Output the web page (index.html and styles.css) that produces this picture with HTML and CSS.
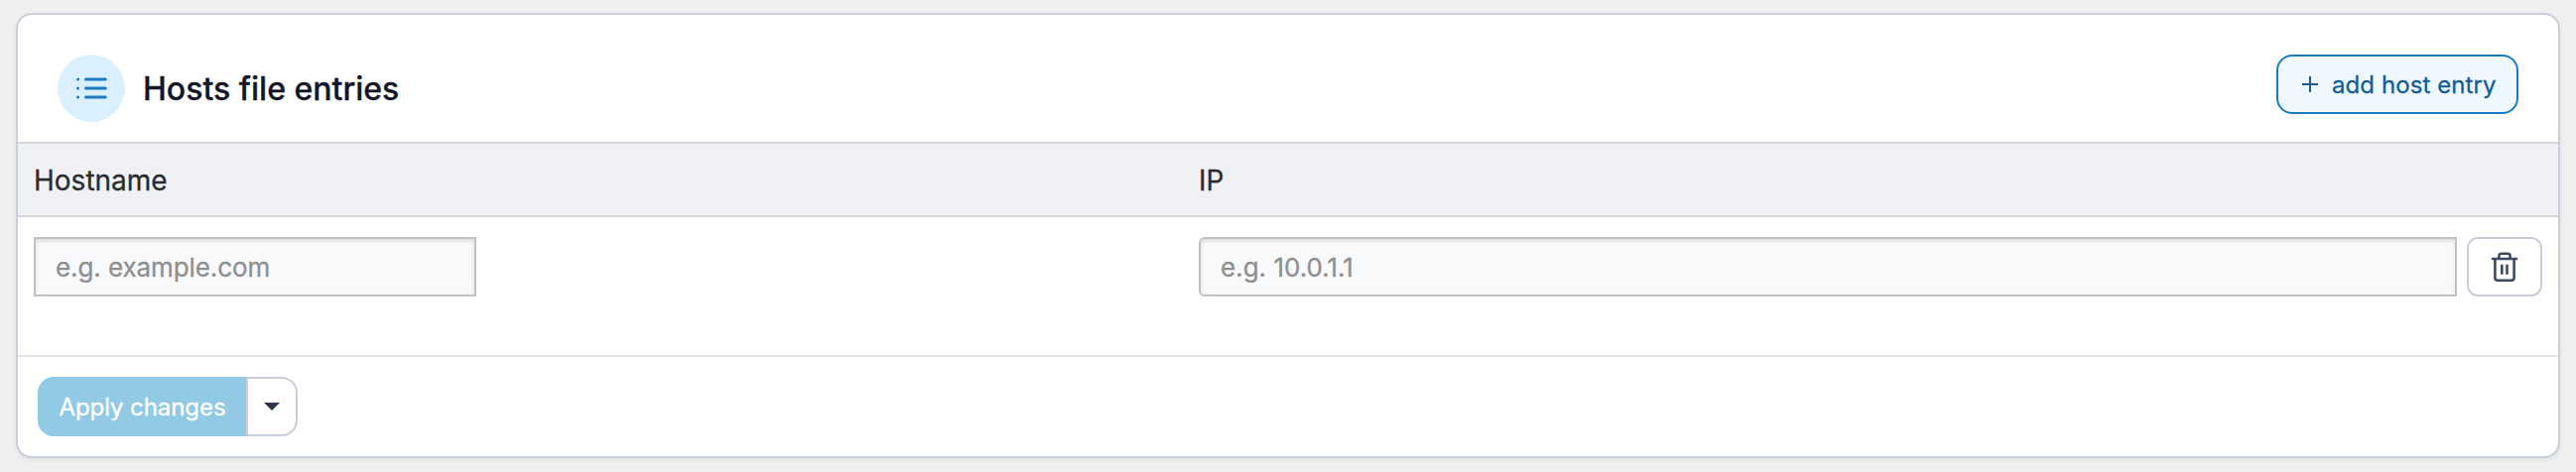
FILE: index.html
```html
<!DOCTYPE html>
<html lang="en">
<head>
<meta charset="utf-8">
<title>Hosts file entries</title>
<link rel="stylesheet" href="styles.css">
</head>
<body>
<section class="card">
  <header class="card-header">
    <div class="heading">
      <span class="badge">
        <svg width="32" height="24" viewBox="0 0 32 24" fill="none" stroke="#1a7cc0" stroke-width="3" stroke-linecap="round">
          <path d="M10.5 3h19.8M10.5 12h19.8M10.5 21h19.8M2.5 3h.1M2.5 12h.1M2.5 21h.1"/>
        </svg>
      </span>
      <h2 class="title">Hosts file entries</h2>
    </div>
    <button class="btn-add" type="button">
      <svg width="16" height="16" viewBox="0 0 16 16" fill="none" stroke="#135d94" stroke-width="2"><path d="M8 0v16M0 8h16"/></svg>
      <span class="add-label">add host entry</span>
    </button>
  </header>
  <div class="columns table-head">
    <span class="column-name">Hostname</span>
    <span class="column-name">IP</span>
  </div>
  <div class="columns table-row">
    <div class="cell"><input class="field field-host" type="text" placeholder="e.g. example.com"></div>
    <div class="cell">
      <input class="field field-ip" type="text" placeholder="e.g. 10.0.1.1">
      <button class="btn-delete" type="button" aria-label="Delete">
        <svg width="28" height="32" viewBox="0 0 28 32" fill="none" stroke="#3d4b5f" stroke-width="2.6" stroke-linecap="round" stroke-linejoin="round">
          <path d="M2 8h24M4.4 8v19.3a2.4 2.4 0 0 0 2.4 2.4h14.4a2.4 2.4 0 0 0 2.4-2.4V8M8.4 7.600V5.300a2.500 2.500 0 0 1 2.500-2.500h6.200a2.500 2.500 0 0 1 2.500 2.500v2.300M11.300 14.700v8M16.500 14.700v8"/>
        </svg>
      </button>
    </div>
  </div>
  <footer class="card-footer">
    <button class="btn-apply" type="button">Apply changes</button>
    <button class="btn-more" type="button" aria-label="More actions">
      <svg width="16" height="8" viewBox="0 0 16 8"><path d="M0 0h16L8 8z" fill="#2b3448"/></svg>
    </button>
  </footer>
</section>
</body>
</html>
```
FILE: styles.css
```css
* { box-sizing: border-box; }
body {
  margin: 0;
  padding: 13px 16px 14px;
  background: #f0f0f0;
  font-family: Inter, "Liberation Sans", sans-serif;
  -webkit-text-stroke: .3px;
}
button { font-family: inherit; margin: 0; }
svg { display: block; flex: none; }
.card {
  height: 449px;
  background: #fff;
  border: 2px solid #c9cedb;
  border-radius: 16px;
  box-shadow: 0 2px 4px rgba(24, 36, 51, .08);
  overflow: hidden;
}
.card-header {
  display: flex;
  justify-content: space-between;
  align-items: flex-start;
  height: 128px;
  padding: 40px 40px 0;
}
.heading { display: flex; align-items: center; gap: 18px; }
.badge {
  display: flex;
  align-items: center;
  justify-content: center;
  width: 68px;
  height: 68px;
  border-radius: 50%;
  background: #dbf0ff;
}
.title {
  margin: 0;
  padding-top: 1px;
  color: #131626;
  font-size: 32px;
  font-weight: 500;
  line-height: 40px;
}
.btn-add {
  display: flex;
  align-items: center;
  gap: 14px;
  width: 244px;
  height: 60px;
  padding: 0 0 0 24px;
  border: 2px solid #1a7cc0;
  border-radius: 16px;
  background: #eff8ff;
  color: #135d94;
  font-size: 24px;
  letter-spacing: .08px;
  white-space: nowrap;
}
.columns {
  display: grid;
  grid-template-columns: 1174px 1fr;
  padding: 0 16px;
}
.table-head {
  height: 76px;
  align-items: center;
  border-top: 2px solid #d6d7d9;
  border-bottom: 2px solid #d6d7d9;
  background: #f0f1f5;
}
.column-name {
  padding-top: 2px;
  color: #2c2c2c;
  font-size: 28px;
  line-height: 36px;
}
.table-row { height: 139px; padding-top: 20px; }
.cell { display: flex; align-items: flex-start; gap: 10px; }
.field {
  height: 60px;
  margin: 0;
  padding: 0 20px;
  border: 2px solid #c2c2c2;
  border-radius: 0;
  background: #f8f9fb;
  box-shadow: inset 0 2px 4px rgba(0, 0, 0, .12);
  font-family: inherit;
  font-size: 26px;
  outline: 0;
}
.field::placeholder { color: #8f8f8f; opacity: 1; }
.field-host { width: 446px; letter-spacing: -.09px; }
.field-ip { flex: 1; border-radius: 6px 0 0 6px; }
.btn-delete {
  display: flex;
  align-items: center;
  justify-content: center;
  width: 76px;
  height: 60px;
  padding: 0;
  border: 2px solid #c9cedb;
  border-radius: 11px;
  background: #fff;
}
.card-footer {
  display: flex;
  padding: 20px 20px 0;
  border-top: 2px solid #e4e4e4;
}
.btn-apply {
  width: 210px;
  height: 60px;
  padding: 0 0 0 1px;
  border: 0;
  border-radius: 16px 0 0 16px;
  background: #92c9e4;
  color: #fff;
  font-size: 24px;
  letter-spacing: -.08px;
  white-space: nowrap;
}
.btn-more {
  display: flex;
  align-items: center;
  justify-content: center;
  width: 52px;
  height: 60px;
  padding: 0;
  border: 2px solid #c9cedb;
  border-left-width: 2px;
  border-radius: 0 16px 16px 0;
  background: #fff;
}
```
